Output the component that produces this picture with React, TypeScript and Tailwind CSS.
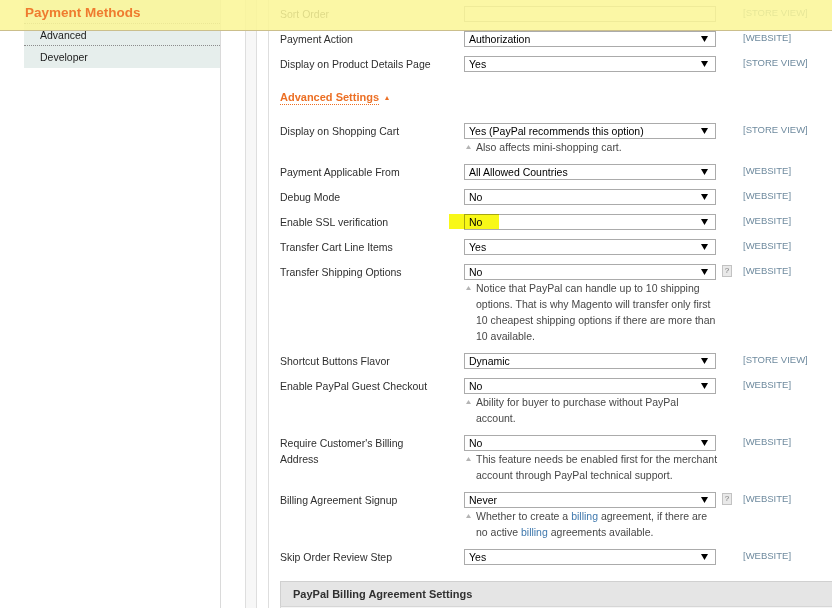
import type { ReactNode } from 'react';

type Field = {
  label: string;
  value: string;
  scope: string;
  notes?: ReactNode[];
  help?: boolean;
  mark?: boolean;
  input?: boolean;
};

const before: Field[] = [
  { label: 'Sort Order', value: '', scope: '[STORE VIEW]', input: true },
  { label: 'Payment Action', value: 'Authorization', scope: '[WEBSITE]' },
  { label: 'Display on Product Details Page', value: 'Yes', scope: '[STORE VIEW]' },
];

const billing = <span className="text-[#3f78ad]">billing</span>;

const advanced: Field[] = [
  {
    label: 'Display on Shopping Cart',
    value: 'Yes (PayPal recommends this option)',
    scope: '[STORE VIEW]',
    notes: ['Also affects mini-shopping cart.'],
  },
  { label: 'Payment Applicable From', value: 'All Allowed Countries', scope: '[WEBSITE]' },
  { label: 'Debug Mode', value: 'No', scope: '[WEBSITE]' },
  { label: 'Enable SSL verification', value: 'No', scope: '[WEBSITE]', mark: true },
  { label: 'Transfer Cart Line Items', value: 'Yes', scope: '[WEBSITE]' },
  {
    label: 'Transfer Shipping Options',
    value: 'No',
    scope: '[WEBSITE]',
    help: true,
    notes: [
      'Notice that PayPal can handle up to 10 shipping',
      'options. That is why Magento will transfer only first',
      '10 cheapest shipping options if there are more than',
      '10 available.',
    ],
  },
  { label: 'Shortcut Buttons Flavor', value: 'Dynamic', scope: '[STORE VIEW]' },
  {
    label: 'Enable PayPal Guest Checkout',
    value: 'No',
    scope: '[WEBSITE]',
    notes: ['Ability for buyer to purchase without PayPal', 'account.'],
  },
  {
    label: "Require Customer's Billing Address",
    value: 'No',
    scope: '[WEBSITE]',
    notes: ['This feature needs be enabled first for the merchant', 'account through PayPal technical support.'],
  },
  {
    label: 'Billing Agreement Signup',
    value: 'Never',
    scope: '[WEBSITE]',
    help: true,
    notes: [
      <>Whether to create a {billing} agreement, if there are</>,
      <>no active {billing} agreements available.</>,
    ],
  },
  { label: 'Skip Order Review Step', value: 'Yes', scope: '[WEBSITE]' },
];

function Arrow() {
  return (
    <svg width="7" height="6" viewBox="0 0 7 6" className="shrink-0">
      <path d="M0 0h7L3.5 6z" fill="#000" />
    </svg>
  );
}

function Select({ value, mark, input }: { value: string; mark?: boolean; input?: boolean }) {
  return (
    <div className="relative flex h-[16px] items-center justify-between border border-[#ababab] bg-white pl-[4px] pr-[7px]">
      {mark && <span className="absolute left-[-16px] top-[-1px] h-[15px] w-[50px] bg-[#f8f818] mix-blend-multiply" />}
      <span className="relative leading-[14px] text-black">{value}</span>
      {!input && <Arrow />}
    </div>
  );
}

function Notes({ lines }: { lines: ReactNode[] }) {
  return (
    <div className="flex pl-[2px] text-[#474747]">
      <div className="w-[10px] shrink-0 pt-[6px]">
        <svg width="5" height="4" viewBox="0 0 5 4">
          <path d="M0 4h5L2.5 0z" fill="#b4b4b4" />
        </svg>
      </div>
      <div className="leading-[16px]">
        {lines.map((l, i) => (
          <div key={i} className="whitespace-nowrap">{l}</div>
        ))}
      </div>
    </div>
  );
}

function Help() {
  return (
    <div className="flex h-[12px] w-[10px] items-center justify-center border border-[#c2c2c2] bg-[#e9e9e9] text-[8px] leading-none text-[#777]">
      ?
    </div>
  );
}

function Row({ f }: { f: Field }) {
  return (
    <div className="mb-[9px] flex">
      <div className="w-[184px] shrink-0 pr-[26px] leading-[16px] text-[#2f2f2f]">{f.label}</div>
      <div className="w-[252px] shrink-0">
        <Select value={f.value} mark={f.mark} input={f.input} />
        {f.notes && <Notes lines={f.notes} />}
      </div>
      <div className="w-[27px] shrink-0 pl-[6px] pt-[1px]">{f.help && <Help />}</div>
      <div className="text-[9.5px] leading-[14px] text-[#6e8a9e]">{f.scope}</div>
    </div>
  );
}

export default function App() {
  return (
    <div className="relative h-screen w-full overflow-hidden bg-white font-['Liberation_Sans',Arial,sans-serif] text-[10.5px]">
      <div className="flex h-full">
        <div className="w-6 shrink-0" />
        <aside className="w-[197px] shrink-0 border-r border-[#dadada]">
          <div className="bg-[#e6eeec] text-[#1c1c1c]">
            <div className="h-[24px] border-b border-dotted border-[#8c8c8c]" />
            <div className="h-[22px] border-b border-dotted border-[#8c8c8c] pl-4 leading-[22px]">Advanced</div>
            <div className="h-[22px] pl-4 leading-[22px]">Developer</div>
          </div>
        </aside>
        <div className="w-6 shrink-0" />
        <div className="w-[12px] shrink-0 border-x border-[#dedede] bg-[#f7f7f7]" />
        <div className="w-[12px] shrink-0 border-r border-[#dedede]" />

        <main className="min-w-0 flex-1 pl-[11px] pt-[6px]">
          {before.map((f) => (
            <Row key={f.label} f={f} />
          ))}

          <div className="h-[42px] pt-[9px]">
            <span className="inline-flex items-center gap-[6px]">
              <span className="border-b border-dotted border-[#ec6f24] text-[11px] font-bold leading-[13px] text-[#ec6f24]">
                Advanced Settings
              </span>
              <svg width="4" height="4" viewBox="0 0 4 4">
                <path d="M0 4h4L2 0z" fill="#ec6f24" />
              </svg>
            </span>
          </div>

          {advanced.map((f) => (
            <Row key={f.label} f={f} />
          ))}

          <div className="mt-[16px] border-l border-t border-[#d0d0d0] bg-[#e5e5e5] pl-3 text-[11px] font-bold leading-[24px] text-[#303030]">
            PayPal Billing Agreement Settings
          </div>
          <div className="h-10 border-l border-t border-[#d6d6d6] bg-[#f5f5f5]" />
        </main>
      </div>

      {/* highlighted sticky header */}
      <div className="absolute inset-x-0 top-0 h-[31px] border-b border-[#cbbf8c] bg-[rgba(250,246,150,0.86)]">
        <div className="pl-[25px] pt-[5px] text-[13.5px] font-bold leading-[16px] text-[#ef7b2f]">Payment Methods</div>
      </div>
    </div>
  );
}
